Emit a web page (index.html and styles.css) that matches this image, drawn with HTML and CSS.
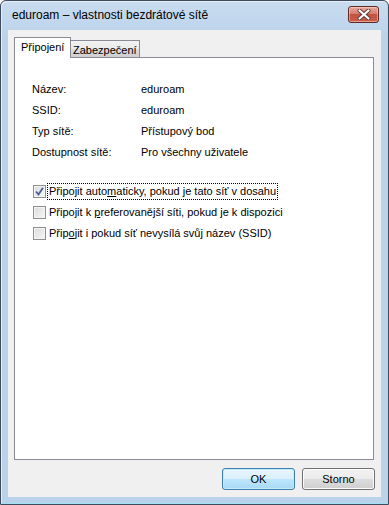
FILE: index.html
```html
<!DOCTYPE html>
<html lang="cs">
<head>
  <meta charset="UTF-8">
  <meta name="viewport" content="width=device-width, initial-scale=1.0">
  <title>eduroam – vlastnosti bezdrátové sítě</title>
  <link rel="stylesheet" href="styles.css">
</head>
<body>
  <div class="window">
    <div class="titlebar">
      <span class="title">eduroam – vlastnosti bezdrátové sítě</span>
      <button class="close" aria-label="Zavřít">
        <svg width="14" height="11" viewBox="0 0 14 11">
          <path d="M2.5 1.5 L11.5 9.5 M11.5 1.5 L2.5 9.5" stroke="#5a3a36" stroke-width="4" stroke-linecap="round"/>
          <path d="M2.5 1.5 L11.5 9.5 M11.5 1.5 L2.5 9.5" stroke="#fff" stroke-width="2.2" stroke-linecap="round"/>
        </svg>
      </button>
    </div>
    <div class="client">
      <div class="tabs">
        <div class="tab active">Připojení</div>
        <div class="tab">Zabezpečení</div>
      </div>
      <div class="panel">
        <div class="props">
          <div class="prop"><span class="key">Název:</span><span>eduroam</span></div>
          <div class="prop"><span class="key">SSID:</span><span>eduroam</span></div>
          <div class="prop"><span class="key">Typ sítě:</span><span>Přístupový bod</span></div>
          <div class="prop"><span class="key">Dostupnost sítě:</span><span>Pro všechny uživatele</span></div>
        </div>
        <div class="options">
          <label class="check">
            <span class="box">
              <svg width="9" height="9" viewBox="0 0 9 9"><path d="M1 4.5 L3.5 7.5 L8 0.8" fill="none" stroke="#4a5f97" stroke-width="1.8"/></svg>
            </span>
            <span class="text focus">Připojit auto<u>m</u>aticky, pokud je tato síť v dosahu</span>
          </label>
          <label class="check">
            <span class="box"></span>
            <span class="text">Připojit k <u>p</u>referovanější síti, pokud je k dispozici</span>
          </label>
          <label class="check">
            <span class="box"></span>
            <span class="text">Přip<u>o</u>jit i pokud síť nevysílá svůj název (SSID)</span>
          </label>
        </div>
      </div>
      <div class="actions">
        <button class="btn default">OK</button>
        <button class="btn">Storno</button>
      </div>
    </div>
  </div>
</body>
</html>
```

FILE: styles.css
```css
* {
  margin: 0;
  padding: 0;
  box-sizing: border-box;
}

body {
  font-family: "Liberation Sans", Arial, sans-serif;
  font-size: 11px;
  color: #000;
  background: #fff;
}

.window {
  width: 389px;
  height: 505px;
  display: flex;
  flex-direction: column;
  padding: 0 7px 7px 7px;
  border: 1px solid #3d4b5c;
  border-radius: 6px 6px 0 0;
  background: linear-gradient(#c9dcf0, #bad2ea 40px);
  box-shadow: inset -1px -1px 0 #9fe1f2, inset 1px 1px 0 #e4eef8;
}

.titlebar {
  height: 29px;
  display: flex;
  align-items: center;
  padding-left: 4px;
}

.title {
  font-size: 12px;
  margin-top: -1px;
}

.close {
  margin-left: auto;
  margin-right: 2px;
  margin-top: -3px;
  width: 31px;
  height: 17px;
  display: flex;
  align-items: center;
  justify-content: center;
  border: 1px solid #5f2a24;
  border-radius: 3px;
  background: linear-gradient(#e8a99d, #d47e70 45%, #c2523f 50%, #c9604c);
  box-shadow: inset 0 0 0 1px rgba(255, 220, 210, 0.5);
}

.client {
  flex: 1;
  display: flex;
  flex-direction: column;
  background: #f0f0f0;
  padding: 7px 6px 7px 6px;
}

.tabs {
  height: 20px;
  display: flex;
  align-items: flex-end;
}

.tab {
  height: 17px;
  padding: 0 2px;
  margin-left: -1px;
  border: 1px solid #898c95;
  border-bottom: none;
  background: linear-gradient(#f2f2f2, #ebebeb 50%, #dddddd 50%, #cfcfcf);
  line-height: 18px;
}

.tab.active {
  position: relative;
  z-index: 1;
  margin-left: 0;
  width: 57px;
  height: 21px;
  margin-bottom: -1px;
  padding: 0 6px;
  background: #fff;
  line-height: 18px;
}

.panel {
  flex: 1;
  margin-right: 1px;
  border: 1px solid #898c95;
  background: #fff;
  padding: 21px 0 0 17px;
}

.prop {
  display: flex;
  height: 21px;
  line-height: 21px;
}

.key {
  width: 109px;
}

.options {
  margin-top: 18px;
}

.check {
  display: flex;
  align-items: center;
  height: 21px;
}

.box {
  width: 13px;
  height: 13px;
  margin-left: 1px;
  margin-right: 1px;
  display: flex;
  align-items: center;
  justify-content: center;
  border: 1px solid #8e8f8f;
  background: linear-gradient(135deg, #dcdcdc, #f6f6f6);
  box-shadow: inset 0 0 0 1px #f4f4f4;
}

.text {
  padding: 0 1px;
  line-height: 15px;
  border: 1px dotted transparent;
}

.text.focus {
  border-color: #000;
}

.actions {
  margin-top: 8px;
  display: flex;
  justify-content: flex-end;
  gap: 7px;
}

.btn {
  width: 73px;
  height: 22px;
  font-family: inherit;
  font-size: 11px;
  color: #000;
  border: 1px solid #707070;
  border-radius: 3px;
  background: linear-gradient(#f2f2f2, #ebebeb 50%, #dddddd 50%, #cfcfcf);
  box-shadow: inset 0 0 0 1px #fcfcfc;
}

.btn.default {
  border-color: #3c7fb1;
  background: linear-gradient(#eaf6fd, #d9f0fc 50%, #bee6fd 50%, #a7d9f5);
  box-shadow: inset 0 0 0 1px #c6e9fc;
}
```
